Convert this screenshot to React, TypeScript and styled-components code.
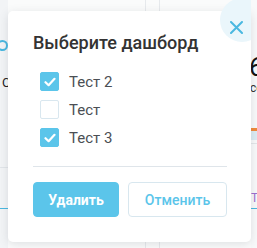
import styled, { createGlobalStyle } from 'styled-components'

const GlobalStyle = createGlobalStyle`
  html, body {
    margin: 0;
    padding: 0;
    background: #f6f7f8;
    font-family: Roboto, "Noto Sans", sans-serif;
  }
  #root {
    width: 257px;
    height: 248px;
    overflow: hidden;
    position: relative;
  }
`

const Page = styled.div`
  display: flex;
  width: 257px;
  height: 248px;
  background: #f7f8f9;
`

const LeftStrip = styled.div`
  width: 8px;
  display: flex;
  flex-direction: column;
  overflow: hidden;
  background: #f2f4f6;
`

const Middle = styled.div`
  flex: 1;
  display: flex;
  background: #fafbfb;
`

const Column = styled.div<{ $width: number }>`
  width: ${({ $width }) => $width}px;
  border-right: 1px solid #e6e9ec;
`

const RightStrip = styled.div`
  width: 6px;
  display: flex;
  flex-direction: column;
  overflow: hidden;
  background: #f8f9fa;
`

const Spacer = styled.div<{ $h: number }>`
  height: ${({ $h }) => $h}px;
  flex-shrink: 0;
`

const RingIcon = styled.div`
  width: 7px;
  height: 7px;
  margin-left: -3px;
  border: 2px solid #4ab8e0;
  border-radius: 50%;
  flex-shrink: 0;
`

const Glyph = styled.div<{ $size: number; $color: string; $shift?: number }>`
  font-size: ${({ $size }) => $size}px;
  line-height: 1;
  color: ${({ $color }) => $color};
  margin-left: ${({ $shift }) => $shift ?? 0}px;
  white-space: nowrap;
  flex-shrink: 0;
`

const Line = styled.div<{ $color: string; $h?: number }>`
  height: ${({ $h }) => $h ?? 1}px;
  background: ${({ $color }) => $color};
  flex-shrink: 0;
`

const Modal = styled.div`
  position: absolute;
  left: 8px;
  top: 11px;
  width: 243px;
  height: 231px;
  box-sizing: border-box;
  padding: 21px 24px 0 25px;
  background: #fff;
  border-radius: 5px;
  box-shadow: 0 2px 10px rgba(60, 70, 80, 0.15);
  display: flex;
  flex-direction: column;
`

const HaloClip = styled.div`
  position: absolute;
  left: 212px;
  top: -13px;
  width: 31px;
  height: 44px;
  overflow: hidden;
`

const Halo = styled.div`
  width: 44px;
  height: 44px;
  border-radius: 50%;
  background: #eaf6fb;
`

const CloseButton = styled.button`
  position: absolute;
  left: 220px;
  top: 8px;
  width: 16px;
  height: 16px;
  padding: 0;
  border: 0;
  background: transparent;
  display: flex;
  align-items: center;
  justify-content: center;
  cursor: pointer;
`

const Title = styled.h2`
  margin: 0 0 18px;
  font-size: 18px;
  line-height: 22px;
  font-weight: 500;
  color: #333;
`

const Options = styled.div`
  display: flex;
  flex-direction: column;
  gap: 9px;
  padding-left: 7px;
`

const Option = styled.label`
  display: flex;
  align-items: center;
  gap: 10px;
  height: 19px;
  font-size: 15px;
  color: #4b4f54;
  cursor: pointer;
`

const Box = styled.span<{ $checked: boolean }>`
  width: 19px;
  height: 19px;
  box-sizing: border-box;
  border-radius: 2px;
  display: flex;
  align-items: center;
  justify-content: center;
  background: ${({ $checked }) => ($checked ? '#5bc5ea' : '#fff')};
  border: 1px solid ${({ $checked }) => ($checked ? '#5bc5ea' : '#d9e7ef')};
`

const Divider = styled.div`
  height: 1px;
  background: #dfe5ea;
  margin: 19px 0 15px;
`

const Actions = styled.div`
  display: flex;
  gap: 9px;
`

const Button = styled.button<{ $primary?: boolean }>`
  height: 35px;
  width: ${({ $primary }) => ($primary ? 86 : 99)}px;
  box-sizing: border-box;
  border-radius: 4px;
  font-family: Roboto, "Noto Sans", sans-serif;
  font-size: 14px;
  font-weight: ${({ $primary }) => ($primary ? 700 : 500)};
  color: ${({ $primary }) => ($primary ? '#fff' : '#5bc5ea')};
  background: ${({ $primary }) => ($primary ? '#5bc5ea' : '#fff')};
  border: 1px solid ${({ $primary }) => ($primary ? '#5bc5ea' : '#d8e7ef')};
  cursor: pointer;
`

const Check = () => (
  <svg width="12" height="10" viewBox="0 0 12 10">
    <path d="M1.5 5.2 L4.6 8.2 L10.5 1.8" fill="none" stroke="#fff" strokeWidth="2.2" strokeLinecap="round" strokeLinejoin="round" />
  </svg>
)

const items = [
  { id: 1, name: 'Тест 2', checked: true },
  { id: 2, name: 'Тест', checked: false },
  { id: 3, name: 'Тест 3', checked: true },
]

const App = () => (
  <>
    <GlobalStyle />
    <Page>
      <LeftStrip>
        <Spacer $h={40} />
        <RingIcon />
        <Spacer $h={25} />
        <Glyph $size={13} $color="#222" $shift={2}>С</Glyph>
        <Spacer $h={78} />
        <Line $color="#e1e5e9" />
        <Spacer $h={40} />
        <Line $color="#4ab8e0" />
      </LeftStrip>
      <Middle>
        <Column $width={137} />
        <Column $width={13} />
      </Middle>
      <RightStrip>
        <Spacer $h={54} />
        <Glyph $size={26} $color="#111" $shift={-2}>6</Glyph>
        <Spacer $h={2} />
        <Glyph $size={12} $color="#333" $shift={-1}>се</Glyph>
        <Spacer $h={34} />
        <Line $color="#f08a3c" $h={3} />
        <Line $color="#dcecf4" $h={9} />
        <Spacer $h={3} />
        <Line $color="#e3e6e9" />
        <Spacer $h={48} />
        <Glyph $size={12} $color="#9a6fd0">Т</Glyph>
        <Spacer $h={4} />
        <Line $color="#4ab8e0" />
      </RightStrip>
    </Page>
    <Modal>
      <HaloClip>
        <Halo />
      </HaloClip>
      <CloseButton aria-label="close">
        <svg width="13" height="13" viewBox="0 0 13 13">
          <path d="M1 1 L12 12 M12 1 L1 12" stroke="#4ab8e0" strokeWidth="2" strokeLinecap="round" />
        </svg>
      </CloseButton>
      <Title>Выберите дашборд</Title>
      <Options>
        {items.map(i => (
          <Option key={i.id}>
            <Box $checked={i.checked}>{i.checked && <Check />}</Box>
            {i.name}
          </Option>
        ))}
      </Options>
      <Divider />
      <Actions>
        <Button $primary>Удалить</Button>
        <Button>Отменить</Button>
      </Actions>
    </Modal>
  </>
)

export default App
